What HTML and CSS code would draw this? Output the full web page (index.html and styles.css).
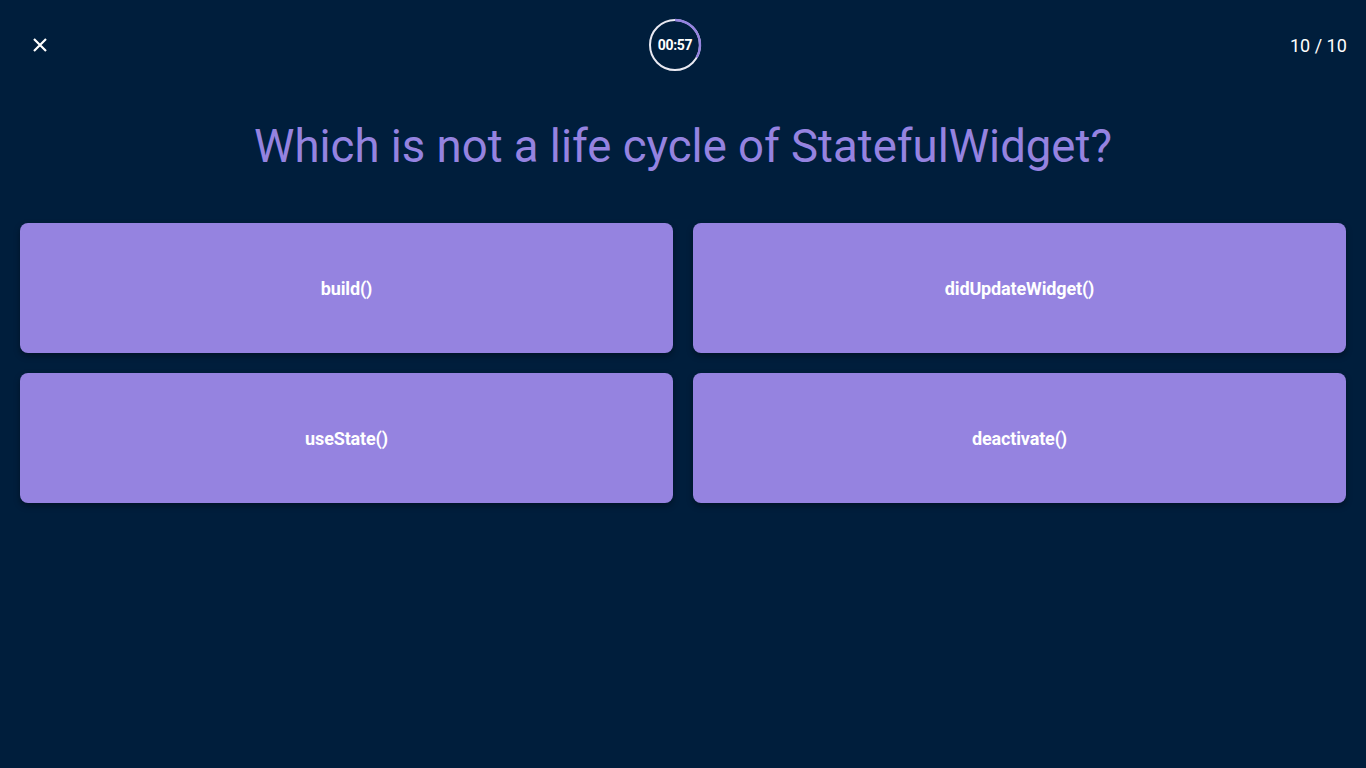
FILE: index.html
```html
<!DOCTYPE html>
<html>
<head>
<meta charset="utf-8">
<link rel="stylesheet" href="styles.css">
</head>
<body>
<div class="page">
  <header class="topbar">
    <button class="close" aria-label="Close">
      <svg width="16" height="16" viewBox="0 0 16 16"><path d="M2 2 L14 14 M14 2 L2 14" stroke="#fff" stroke-width="2.2" stroke-linecap="butt"/></svg>
    </button>
    <div class="timer">
      <svg class="ring" width="54" height="54" viewBox="0 0 54 54">
        <circle cx="27" cy="27" r="25" fill="none" stroke="#e9e9f2" stroke-width="2"/>
        <path d="M27 2 A25 25 0 0 1 48.65 39.5" fill="none" stroke="#9583e0" stroke-width="2.4"/>
      </svg>
      <span class="time">00:57</span>
    </div>
    <div class="count">10 / 10</div>
  </header>
  <h1 class="question">Which is not a life cycle of StatefulWidget?</h1>
  <div class="answers">
    <button class="answer">build()</button>
    <button class="answer">didUpdateWidget()</button>
    <button class="answer">useState()</button>
    <button class="answer">deactivate()</button>
  </div>
</div>
</body>
</html>
```

FILE: styles.css
```css
* { box-sizing: border-box; }
html, body {
  margin: 0;
  padding: 0;
  height: 100%;
  background: #001e3c;
  font-family: Roboto, "Liberation Sans", sans-serif;
}
.page {
  padding: 0 20px;
}
.topbar {
  height: 90px;
  display: flex;
  align-items: center;
  justify-content: space-between;
}
.close {
  background: none;
  border: 0;
  padding: 0;
  width: 40px;
  height: 40px;
  display: flex;
  align-items: center;
  justify-content: center;
  cursor: pointer;
}
.timer {
  position: relative;
  width: 54px;
  height: 54px;
  display: flex;
  align-items: center;
  justify-content: center;
}
.ring {
  position: absolute;
  left: 0;
  top: 0;
}
.time {
  color: #fff;
  font-weight: 700;
  font-size: 14px;
  letter-spacing: -0.3px;
}
.count {
  width: 56px;
  text-align: right;
  white-space: nowrap;
  color: #fff;
  font-size: 18px;
}
.question {
  margin: 29px 0 0;
  text-align: center;
  color: #9583e0;
  font-weight: 400;
  font-size: 45.5px;
  line-height: 56px;
}
.answers {
  margin-top: 48px;
  display: grid;
  grid-template-columns: 1fr 1fr;
  grid-auto-rows: 130px;
  gap: 20px;
}
.answer {
  border: 0;
  border-radius: 8px;
  background: #9583e0;
  color: #fff;
  font-family: Roboto, "Liberation Sans", sans-serif;
  font-weight: 700;
  font-size: 18px;
  letter-spacing: -0.15px;
  box-shadow: 0 3px 6px rgba(0, 0, 0, 0.35);
  cursor: pointer;
}
```
